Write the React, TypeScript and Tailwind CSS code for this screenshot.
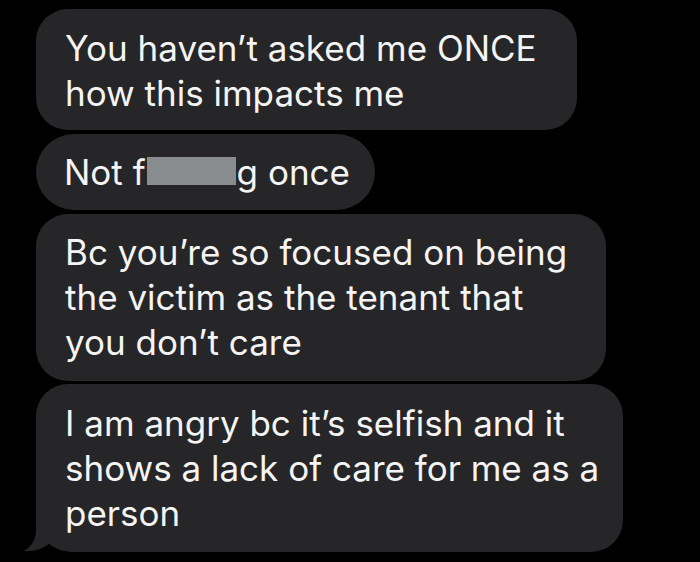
import React from 'react';

// Bubble colour sampled from the screenshot
const BUBBLE = '#262629';

const Tail: React.FC = () => (
  <svg
    className="absolute left-[-14px] bottom-0"
    width={32}
    height={41}
    viewBox="0 0 32 41"
    overflow="visible"
  >
    <path d="M14 1 L14 19 C14 29 9 36 2 40 C11 41 20 38 27 33 L27 9 Z" fill={BUBBLE} />
  </svg>
);

const App: React.FC = () => {
  return (
    <div
      className="w-[700px] h-[562px] bg-black overflow-hidden text-[#f4f4f4]"
      style={{ fontFamily: 'Inter, "Liberation Sans", sans-serif' }}
    >
      <div className="flex flex-col items-start pt-[9px] pl-[36px] text-[35px] leading-[45px]">
        <div className="w-[541px] bg-[#262629] rounded-[32px] pl-[29px] pt-[17px] pb-[14px] whitespace-nowrap">
          <div>You haven’t asked me ONCE</div>
          <div>how this impacts me</div>
        </div>

        <div className="mt-[4px] w-[339px] bg-[#262629] rounded-full pl-[28px] pt-[16px] pb-[15px] whitespace-nowrap">
          Not f
          <span className="inline-block w-[89px] h-[28px] bg-[#8a8d90] mx-[1px]" />
          g once
        </div>

        <div className="mt-[4px] w-[570px] bg-[#262629] rounded-[32px] pl-[29px] pt-[16px] pb-[16px] whitespace-nowrap">
          <div>Bc you’re so focused on being</div>
          <div>the victim as the tenant that</div>
          <div>you don’t care</div>
        </div>

        <div className="relative mt-[3px] w-[587px] bg-[#262629] rounded-[32px] rounded-bl-[36px] pl-[29px] pt-[17px] pb-[16px] whitespace-nowrap">
          <div>I am angry bc it’s selfish and it</div>
          <div>shows a lack of care for me as a</div>
          <div>person</div>
          <Tail />
        </div>
      </div>
    </div>
  );
};

export default App;
